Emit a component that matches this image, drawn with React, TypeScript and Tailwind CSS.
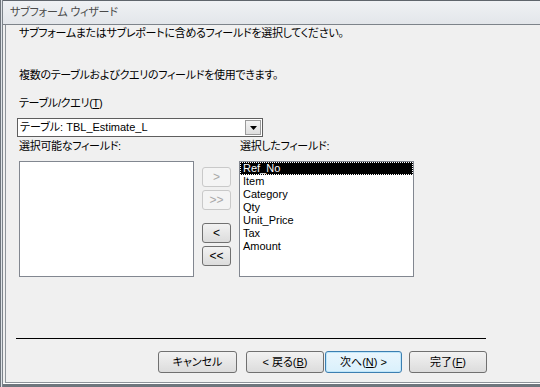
import React from 'react';

const jp = "[font-family:'Liberation_Sans','Noto_Sans_CJK_JP',sans-serif] [font-feature-settings:'palt']";

const fields = ['Ref_No', 'Item', 'Category', 'Qty', 'Unit_Price', 'Tax', 'Amount'];

function ArrowButton({ label, disabled, className }: { label: string; disabled?: boolean; className: string }) {
  return (
    <div
      className={`w-[29px] h-[20px] flex items-center justify-center rounded-[3px] border text-[12px] leading-none ${
        disabled
          ? 'border-[#c9c9c9] bg-[#f4f4f4] text-[#a8a8a8]'
          : 'border-[#707070] bg-gradient-to-b from-[#f2f2f2] to-[#dcdcdc] text-black'
      } ${className}`}
    >
      {label}
    </div>
  );
}

function WizButton({ children, className, focused }: { children: React.ReactNode; className: string; focused?: boolean }) {
  return (
    <div
      className={`h-[22px] flex items-center justify-center rounded-[3px] border text-[11px] text-black ${
        focused
          ? 'border-[#3c7fb1] bg-gradient-to-b from-[#eaf6fd] to-[#d9f0fc] shadow-[inset_0_0_0_1px_#bfe6fa]'
          : 'border-[#707070] bg-gradient-to-b from-[#f2f2f2] to-[#dcdcdc]'
      } ${className}`}
    >
      {children}
    </div>
  );
}

export default function App() {
  return (
    <div className={`w-[540px] h-[387px] flex bg-[#f0f0f0] overflow-hidden text-black ${jp}`}>
      {/* window frame */}
      <div className="w-[3px] h-full flex">
        <div className="w-px h-full bg-[#6f757c]" />
        <div className="w-px h-full bg-[#dfe3e8]" />
        <div className="w-px h-full bg-[#7c838a]" />
      </div>

      <div className="flex-1 flex flex-col">
        {/* title bar */}
        <div className="h-[25px] border-t border-b border-t-[#5f656c] border-b-[#7d838a] bg-gradient-to-b from-[#eff1f4] to-[#e3e6ea] pl-[7px] flex items-center">
          <span className="text-[11px] text-[#4a4a4a] leading-none tracking-[-0.2px]">サブフォーム ウィザード</span>
        </div>

        {/* content */}
        <div className="h-[358px] ml-[2px] border-l border-b border-[#8e9399] pl-[13px] flex flex-col text-[11px] tracking-[-0.3px]">
          <div className="mt-[1px] h-[15px] leading-[15px]">
            サブフォームまたはサブレポートに含めるフィールドを選択してください。
          </div>
          <div className="mt-[27px] h-[15px] leading-[15px]">
            複数のテーブルおよびクエリのフィールドを使用できます。
          </div>
          <div className="mt-[13px] h-[15px] leading-[15px]">
            テーブル/クエリ(<span className="underline">T</span>)
          </div>

          {/* combobox */}
          <div className="mt-[7px] -ml-[2px] w-[246px] h-[19px] border border-[#5e5e5e] bg-white flex items-center">
            <span className="pl-[2px] flex-1 leading-none tracking-normal">テーブル: TBL_Estimate_L</span>
            <div className="w-[16px] h-[15px] mr-px border border-[#9a9a9a] bg-gradient-to-b from-[#f4f4f4] to-[#dedede] flex items-center justify-center">
              <svg width="7" height="4" viewBox="0 0 7 4">
                <path d="M0 0h7L3.5 4z" fill="#000" />
              </svg>
            </div>
          </div>

          <div className="mt-[2px] h-[15px] leading-[15px] flex">
            <span className="w-[221px]">選択可能なフィールド:</span>
            <span>選択したフィールド:</span>
          </div>

          {/* lists */}
          <div className="mt-[7px] h-[116px] flex tracking-normal">
            <div className="w-[175px] h-full border border-[#828790] bg-white" />
            <div className="ml-[8px] flex flex-col">
              <ArrowButton label=">" disabled className="mt-[6px]" />
              <ArrowButton label=">>" disabled className="mt-[3px]" />
              <ArrowButton label="<" className="mt-[13px]" />
              <ArrowButton label="<<" className="mt-[3px]" />
            </div>
            <div className="ml-[8px] w-[175px] h-full border border-[#828790] bg-white text-[11px]">
              {fields.map((f, i) => (
                <div
                  key={f}
                  className={`h-[13px] leading-[13px] pl-[3px] ${
                    i === 0 ? 'bg-black text-white outline-1 outline-dotted outline-white -outline-offset-1' : ''
                  }`}
                >
                  {f}
                </div>
              ))}
            </div>
          </div>

          <div className="mt-[61px] -ml-[3px] w-[470px] h-px bg-black" />

          {/* buttons */}
          <div className="mt-[12px] flex tracking-normal">
            <WizButton className="ml-[139px] w-[79px]">キャンセル</WizButton>
            <WizButton className="ml-[9px] w-[78px]">
              &lt; 戻る(<span className="underline">B</span>)
            </WizButton>
            <WizButton className="ml-px w-[77px]" focused>
              次へ(<span className="underline">N</span>) &gt;
            </WizButton>
            <WizButton className="ml-[7px] w-[78px]">
              完了(<span className="underline">F</span>)
            </WizButton>
          </div>
        </div>

        <div className="h-px bg-white" />
        <div className="flex-1 bg-[#6f767d]" />
      </div>
    </div>
  );
}
